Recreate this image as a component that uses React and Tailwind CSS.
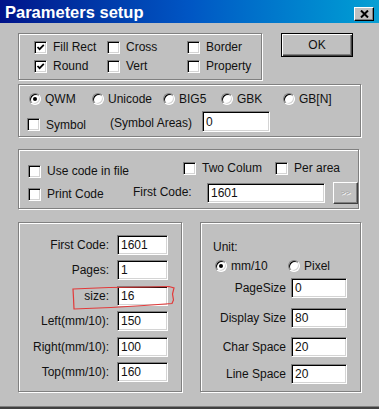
const sunken = 'bg-white border border-t-[#808080] border-l-[#808080] border-b-white border-r-white shadow-[inset_1px_1px_0_#000,inset_-1px_-1px_0_#d4d4d4]';

function Check({ checked, label, className = '', labelClass = '' }) {
  return (
    <div className={`flex items-center gap-[6px] shrink-0 ${className}`}>
      <div className={`w-[13px] h-[13px] shrink-0 flex items-center justify-center ${sunken}`}>
        {checked && (
          <svg width="9" height="9" viewBox="0 0 9 9">
            <path d="M1.5 4 L3.6 6.2 L7.8 1.8" stroke="#000" strokeWidth="1.7" fill="none" />
          </svg>
        )}
      </div>
      <span className={`whitespace-nowrap leading-[14px] ${labelClass}`}>{label}</span>
    </div>
  );
}

function Radio({ checked, label, className = '' }) {
  return (
    <div className={`flex items-center gap-[4px] shrink-0 ${className}`}>
      <div className={`w-[12px] h-[12px] rounded-full shrink-0 flex items-center justify-center ${sunken}`}>
        {checked && <div className="w-[4px] h-[4px] rounded-full bg-black" />}
      </div>
      <span className="whitespace-nowrap leading-[14px]">{label}</span>
    </div>
  );
}

function Field({ value, className = '' }) {
  return (
    <div className={`shrink-0 flex items-center pl-[3px] leading-none ${sunken} ${className}`}>
      {value}
    </div>
  );
}

function Group({ className = '', children }) {
  return (
    <div className={`shrink-0 border border-[#808080] shadow-[inset_1px_1px_0_#fff,1px_1px_0_#fff] ${className}`}>
      {children}
    </div>
  );
}

function Row({ label, value, labelW, inputW, gap }) {
  return (
    <div className="flex items-center h-[20px]">
      <span className={`text-right whitespace-nowrap shrink-0 ${labelW}`}>{label}</span>
      <Field value={value} className={`h-[20px] ${inputW} ${gap}`} />
    </div>
  );
}

export default function App() {
  return (
    <div className="w-[379px] h-[409px] overflow-hidden bg-[#c0c0c0] flex flex-col text-[12px] text-[#111] font-['Liberation_Sans',Arial,sans-serif]">
      {/* title bar */}
      <div className="h-[23px] shrink-0 flex items-start justify-between pl-[5px] pr-[5px] bg-gradient-to-r from-[#00128a] via-[#0056c4] to-[#0aa0d4]">
        <span className="text-white font-bold text-[16.5px] leading-[20px] mt-[2px]">Parameters setup</span>
        <div className="mt-[7px] w-[20px] h-[14px] bg-[#c0c0c0] flex items-center justify-center border border-t-white border-l-white border-b-black border-r-black shadow-[inset_-1px_-1px_0_#808080]">
          <svg width="9" height="8" viewBox="0 0 9 8">
            <path d="M1 0.5 L8 7.5 M8 0.5 L1 7.5" stroke="#000" strokeWidth="2" />
          </svg>
        </div>
      </div>

      <div className="pl-[18px] flex flex-col">
        {/* row 1 */}
        <div className="flex mt-[10px]">
          <Group className="w-[244px] h-[47px]">
            <div className="grid grid-cols-[73px_80px_auto] gap-y-[5px] pl-[15px] pt-[6px]">
              <Check checked label="Fill Rect" />
              <Check label="Cross" />
              <Check label="Border" />
              <Check checked label="Round" />
              <Check label="Vert" />
              <Check label="Property" />
            </div>
          </Group>
          <button className="ml-[19px] w-[72px] h-[24px] bg-[#c0c0c0] border border-black shadow-[inset_1px_1px_0_#fff,inset_-1px_-1px_0_#404040,inset_-2px_-2px_0_#808080] leading-none">
            OK
          </button>
        </div>

        {/* encoding */}
        <Group className="w-[343px] h-[53px] mt-[4px]">
          <div className="flex items-center h-[14px] mt-[7px] pl-[10px]">
            <Radio checked label="QWM" className="w-[63px]" />
            <Radio label="Unicode" className="w-[71px]" />
            <Radio label="BIG5" className="w-[58px]" />
            <Radio label="GBK" className="w-[62px]" />
            <Radio label="GB[N]" />
          </div>
          <div className="flex items-center h-[21px] mt-[5px] pl-[8px]">
            <Check label="Symbol" className="w-[83px] mt-[6px]" />
            <span className="w-[92px] shrink-0 mt-[2px]">(Symbol Areas)</span>
            <Field value="0" className="w-[68px] h-[21px]" />
          </div>
        </Group>

        {/* code options */}
        <Group className="w-[341px] h-[60px] mt-[12px]">
          <div className="flex items-start h-[14px] mt-[11px] pl-[9px]">
            <Check label="Use code in file" className="w-[155px] mt-[3px]" />
            <Check label="Two Colum" className="w-[92px]" />
            <Check label="Per area" />
          </div>
          <div className="flex items-center h-[23px] mt-[6px] pl-[9px]">
            <Check label="Print Code" className="w-[105px] mt-[3px]" />
            <span className="w-[74px] shrink-0 -mt-[2px]">First Code:</span>
            <Field value="1601" className="w-[118px] h-[20px]" />
            <div className="ml-[8px] w-[25px] h-[22px] shrink-0 flex items-center justify-center border border-t-white border-l-white border-b-[#404040] border-r-[#404040] shadow-[inset_-1px_-1px_0_#808080] text-[8px] text-[#a0a0a0] leading-none [text-shadow:1px_1px_0_#fff]">
              &gt;&gt;
            </div>
          </div>
        </Group>

        {/* bottom panels */}
        <div className="flex gap-[18px] mt-[13px]">
          <Group className="relative w-[164px] h-[170px]">
            <div className="flex flex-col gap-[5.4px] pt-[12px]">
              <Row label="First Code:" value="1601" labelW="w-[90px]" inputW="w-[51px]" gap="ml-[8px]" />
              <Row label="Pages:" value="1" labelW="w-[90px]" inputW="w-[51px]" gap="ml-[8px]" />
              <Row label="size:" value="16" labelW="w-[90px]" inputW="w-[51px]" gap="ml-[8px]" />
              <Row label="Left(mm/10):" value="150" labelW="w-[90px]" inputW="w-[51px]" gap="ml-[8px]" />
              <Row label="Right(mm/10):" value="100" labelW="w-[90px]" inputW="w-[51px]" gap="ml-[8px]" />
              <Row label="Top(mm/10):" value="160" labelW="w-[90px]" inputW="w-[51px]" gap="ml-[8px]" />
            </div>
            <svg className="absolute left-0 top-0 pointer-events-none" width="164" height="170" viewBox="0 0 164 170">
              <path
                d="M54 66 L90 64.5 L130 64 L150 63.5 L155 65 L153.5 71 L154.5 77 L153 80.5 L125 82.5 L92 84.5 L55 86 L54.5 75 Z"
                stroke="#e23a3a"
                strokeWidth="1.2"
                fill="none"
              />
            </svg>
          </Group>

          <Group className="w-[161px] h-[170px]">
            <div className="pt-[17px] pl-[12px] leading-[14px]">Unit:</div>
            <div className="flex items-center h-[14px] mt-[5px] pl-[14px]">
              <Radio checked label="mm/10" className="w-[73px]" />
              <Radio label="Pixel" />
            </div>
            <div className="mt-[5px]">
              <Row label="PageSize" value="0" labelW="w-[85px]" inputW="w-[56px]" gap="ml-[5px]" />
            </div>
            <div className="mt-[10px]">
              <Row label="Display Size" value="80" labelW="w-[85px]" inputW="w-[56px]" gap="ml-[5px]" />
            </div>
            <div className="mt-[9px]">
              <Row label="Char Space" value="20" labelW="w-[85px]" inputW="w-[56px]" gap="ml-[5px]" />
            </div>
            <div className="mt-[7px]">
              <Row label="Line Space" value="20" labelW="w-[85px]" inputW="w-[56px]" gap="ml-[5px]" />
            </div>
          </Group>
        </div>
      </div>

      <div className="mt-auto h-[3px] shrink-0 border-t border-[#808080] bg-[#404040]" />
    </div>
  );
}
